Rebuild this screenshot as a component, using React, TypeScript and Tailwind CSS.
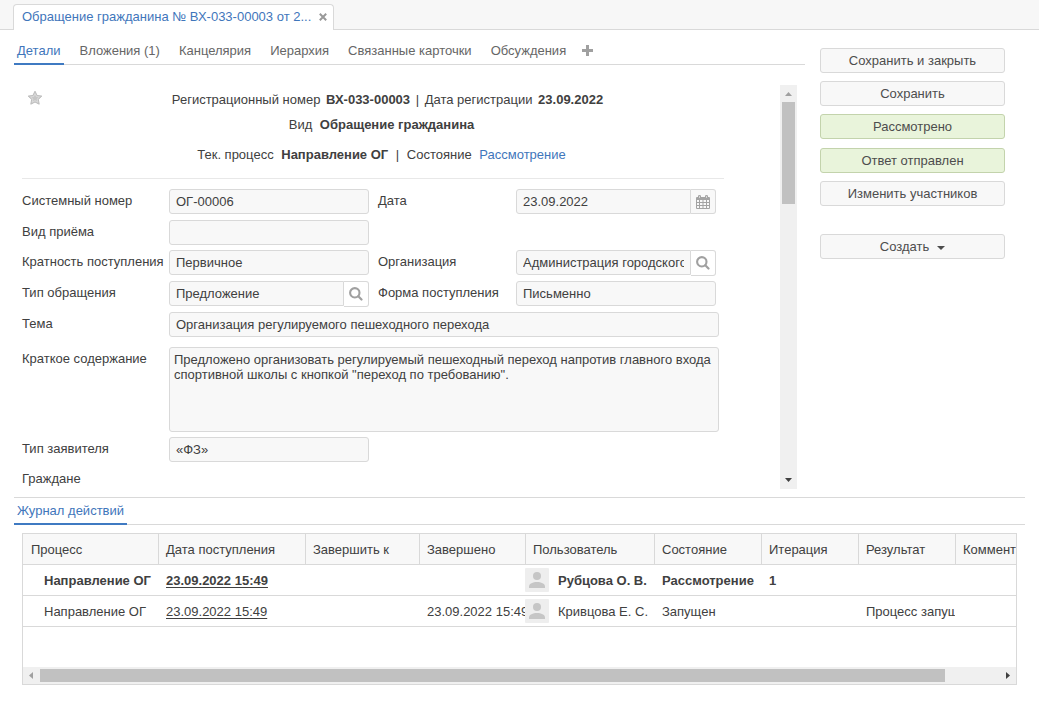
import type { ReactNode } from "react";

const tabs = ["Детали", "Вложения (1)", "Канцелярия", "Иерархия", "Связанные карточки", "Обсуждения"];

const actions = [
  { label: "Сохранить и закрыть", accent: false },
  { label: "Сохранить", accent: false },
  { label: "Рассмотрено", accent: true },
  { label: "Ответ отправлен", accent: true },
  { label: "Изменить участников", accent: false },
];

const columns = [
  { title: "Процесс", width: "w-[135px]" },
  { title: "Дата поступления", width: "w-[147px]" },
  { title: "Завершить к", width: "w-[114px]" },
  { title: "Завершено", width: "w-[106px]" },
  { title: "Пользователь", width: "w-[129px]" },
  { title: "Состояние", width: "w-[107px]" },
  { title: "Итерация", width: "w-[97px]" },
  { title: "Результат", width: "w-[97px]" },
  { title: "Комментарий", width: "w-[120px]" },
];

const rows = [
  {
    process: "Направление ОГ",
    received: "23.09.2022 15:49",
    finished: "",
    user: "Рубцова О. В.",
    state: "Рассмотрение",
    iteration: "1",
    result: "",
    current: true,
  },
  {
    process: "Направление ОГ",
    received: "23.09.2022 15:49",
    finished: "23.09.2022 15:49",
    user: "Кривцова Е. С.",
    state: "Запущен",
    iteration: "",
    result: "Процесс запущен",
    current: false,
  },
];

function SearchIcon() {
  return (
    <svg width="14" height="14" viewBox="0 0 14 14" fill="none" stroke="#a0a0a0" aria-hidden="true">
      <circle cx="5.8" cy="5.8" r="4.7" strokeWidth="2.1" />
      <path d="M9.300 9.300 L12.500 12.500" strokeWidth="2.200" strokeLinecap="round" />
    </svg>
  );
}

function CalendarIcon() {
  return (
    <svg width="14" height="14" viewBox="0 0 14 14" aria-hidden="true">
      <path
        fill="#a3a3a3"
        fillRule="evenodd"
        d="M1 2h1V1q0-1 1.500-1T5 1v1h4V1q0-1 1.500-1T12 1v1h1q1 0 1 1v10q0 1-1 1H1q-1 0-1-1V3q0-1 1-1zM1 5v2h2V5zM4 5v2h2.500V5zM7.500 5v2H10V5zM11 5v2h2V5zM1 8v2h2V8zM4 8v2h2.500V8zM7.500 8v2H10V8zM11 8v2h2V8zM1 11v2h2v-2zM4 11v2h2.500v-2zM7.500 11v2H10v-2zM11 11v2h2v-2zM3.200 1v2h.6V1zM10.200 1v2h.6V1z"
      />
    </svg>
  );
}

function StarIcon() {
  return (
    <svg width="16" height="16" viewBox="0 0 16 16" aria-hidden="true">
      <path
        d="M8 1.200l2.100 4.300 4.700.6-3.500 3.300.9 4.800L8 12l-4.200 2.200.9-4.800L1.200 6.100l4.700-.6z"
        fill="#cfcfcf"
        stroke="#bcbcbc"
        strokeLinejoin="round"
      />
      <path
        d="M8 3.800l1.300 2.700 3 .4-2.200 2.100.6 3L8 10.600 5.300 12l.6-3-2.200-2.100 3-.4z"
        fill="#c6c6c6"
        stroke="#e2e2e2"
        strokeWidth=".6"
      />
    </svg>
  );
}

function Avatar() {
  return (
    <svg className="shrink-0" width="24" height="24" viewBox="0 0 24 24" aria-hidden="true">
      <rect width="24" height="24" rx="1" fill="#eeeeee" />
      <circle cx="12" cy="8" r="4" fill="#c6c6c6" />
      <path d="M4 20v-1.500C4 15.600 8 14 12 14s8 1.600 8 4.500V20z" fill="#c6c6c6" />
    </svg>
  );
}

function Arrow({ d, color }: { d: string; color: string }) {
  return (
    <svg className="shrink-0" width="17" height="17" viewBox="0 0 17 17" aria-hidden="true">
      <path d={d} fill={color} />
    </svg>
  );
}

function Label({ id, children, className = "" }: { id: string; children: ReactNode; className?: string }) {
  return (
    <label htmlFor={id} className={`leading-6 whitespace-nowrap ${className}`}>
      {children}
    </label>
  );
}

const box = "border border-[#d9d9d9] bg-[#f8f8f8] outline-none";

function Field({ id, value, wide = false }: { id: string; value: string; wide?: boolean }) {
  return (
    <input
      id={id}
      readOnly
      defaultValue={value}
      className={`h-[25px] rounded-[3px] px-1.5 ${box} ${wide ? "col-span-3 w-[550px]" : "w-[200px]"}`}
    />
  );
}

function PickerField({ id, value, kind }: { id: string; value: string; kind: "search" | "date" }) {
  return (
    <div className="flex w-[200px] items-start">
      <input id={id} readOnly defaultValue={value} className={`h-[25px] min-w-0 flex-1 rounded-l-[3px] px-1.5 ${box}`} />
      <button
        type="button"
        aria-label={kind === "search" ? "Выбрать" : "Календарь"}
        className={`flex w-[25px] items-center justify-center rounded-r-[3px] border border-l-0 border-[#d9d9d9] ${
          kind === "search" ? "h-[26px] bg-white" : "h-[25px] bg-[#f8f8f8]"
        }`}
      >
        {kind === "search" ? <SearchIcon /> : <CalendarIcon />}
      </button>
    </div>
  );
}

export default function App() {
  return (
    <div className="bg-white pb-4 font-['Liberation_Sans',Arial,sans-serif] text-[13px] leading-4 text-[#404040]">
      <header className="flex h-[30px] items-end border-b border-[#d9d9d9] bg-[#f7f7f7] pl-[13px]">
        <div className="-mb-px flex h-[26px] w-[321px] items-center justify-between rounded-t-[4px] border border-b-0 border-[#d9d9d9] bg-white pr-1.5 pb-px pl-2">
          <a href="#card" className="whitespace-nowrap text-[#3f76bb]">
            Обращение гражданина № ВХ-033-00003 от 2...
          </a>
          <button type="button" aria-label="Закрыть вкладку" className="flex">
            <svg width="8" height="8" viewBox="0 0 8 8" aria-hidden="true">
              <path d="M.8 .8l6.400 6.400M7.200 .8L.8 7.200" stroke="#999" strokeWidth="2" />
            </svg>
          </button>
        </div>
      </header>

      <div className="flex gap-[15px] pr-[34px] pl-[14px]">
        <main className="min-w-0 flex-1">
          <nav className="flex h-[35px] items-stretch gap-[13px] border-b border-[#d9d9d9]">
            {tabs.map((tab, i) => (
              <a
                key={tab}
                href="#tab"
                className={`-mb-px border-b-2 px-[3px] pt-[13px] whitespace-nowrap ${
                  i === 0 ? "border-[#3f7ac2] text-[#3f76bb]" : "border-transparent text-[#666]"
                }`}
              >
                {tab}
              </a>
            ))}
            <button type="button" aria-label="Добавить вкладку" className="flex items-center pt-1.5">
              <svg width="11" height="11" viewBox="0 0 11 11" aria-hidden="true">
                <path d="M5.500 0v11M0 5.500h11" stroke="#a0a0a0" strokeWidth="3" />
              </svg>
            </button>
          </nav>

          <div className="mt-5 flex justify-between pr-2">
            <div className="min-w-0 overflow-hidden pl-2">
              <section className="flex w-[702px] border-b border-[#e8e8e8] pt-[5px] pb-[15px]">
                <button type="button" aria-label="В избранное" className="ml-[5px] flex h-4">
                  <StarIcon />
                </button>
                <div className="flex-1 pr-1 text-center">
                  <p className="mt-0.5 pl-3 whitespace-pre">
                    Регистрационный номер <b className="pl-0.5">ВХ-033-00003</b> <span className="px-0.5">|</span> Дата регистрации{" "}
                    <b className="pl-0.5">23.09.2022</b>
                  </p>
                  <p className="mt-[9px] whitespace-pre">
                    Вид <b className="pl-1">Обращение гражданина</b>
                  </p>
                  <p className="mt-3.5 whitespace-pre">
                    Тек. процесс <b className="px-1">Направление ОГ</b> | <span className="px-1">Состояние</span>{" "}
                    <a href="#state" className="text-[#3f76bb]">
                      Рассмотрение
                    </a>
                  </p>
                </div>
              </section>

              <form className="mt-2.5 grid grid-cols-[147px_209px_138px_203px] grid-rows-[31px_30px_31px_31px_35px_90px_30px_22px] items-start">
                <Label id="number">Системный номер</Label>
                <Field id="number" value="ОГ-00006" />
                <Label id="date">Дата</Label>
                <PickerField id="date" value="23.09.2022" kind="date" />

                <Label id="reception">Вид приёма</Label>
                <Field id="reception" value="" />

                <Label id="repeat" className="col-start-1">
                  Кратность поступления
                </Label>
                <Field id="repeat" value="Первичное" />
                <Label id="org">Организация</Label>
                <PickerField id="org" value="Администрация городского округа" kind="search" />

                <Label id="type">Тип обращения</Label>
                <PickerField id="type" value="Предложение" kind="search" />
                <Label id="channel">Форма поступления</Label>
                <Field id="channel" value="Письменно" />

                <Label id="subject">Тема</Label>
                <Field id="subject" value="Организация регулируемого пешеходного перехода" wide />

                <Label id="summary">Краткое содержание</Label>
                <textarea
                  id="summary"
                  readOnly
                  defaultValue={
                    'Предложено организовать регулируемый пешеходный переход напротив главного входа спортивной школы с кнопкой "переход по требованию".'
                  }
                  className={`col-span-3 h-[85px] w-[550px] resize-none rounded-[3px] px-1 py-1 leading-[15px] ${box}`}
                />

                <Label id="applicant">Тип заявителя</Label>
                <Field id="applicant" value="«ФЗ»" />

                <span className="col-start-1 leading-6">Граждане</span>
              </form>
            </div>

            <div className="flex w-[17px] shrink-0 flex-col items-center bg-[#f0f0f0]">
              <Arrow d="M5 11h7L8.500 7z" color="#a0a0a0" />
              <div className="h-[102px] w-[13px] bg-[#c1c1c1]" />
              <div className="flex-1" />
              <Arrow d="M5 6h7L8.500 10z" color="#404040" />
            </div>
          </div>
        </main>

        <aside className="grid w-[185px] shrink-0 grid-rows-[33px_33px_34px_33px_53px_25px] content-start items-start pt-[18px]">
          {actions.map(({ label, accent }) => (
            <button
              key={label}
              type="button"
              className={`h-[25px] rounded-[3px] border text-[#4d4d4d] ${
                accent ? "border-[#c3d3ac] bg-[#e9f4db]" : "border-[#d9d9d9] bg-[#f8f8f8]"
              }`}
            >
              {label}
            </button>
          ))}
          <button
            type="button"
            className="flex h-[25px] items-center justify-center gap-2 rounded-[3px] border border-[#d9d9d9] bg-[#f8f8f8] text-[#4d4d4d]"
          >
            Создать
            <svg className="mt-0.5" width="8" height="4" viewBox="0 0 8 4" aria-hidden="true">
              <path d="M0 0h8L4 4z" fill="#4d4d4d" />
            </svg>
          </button>
        </aside>
      </div>

      <section className="mt-2 mr-[14px] ml-[14px] border-t border-[#d9d9d9]">
        <nav className="flex h-[27px] border-b border-[#d9d9d9]">
          <a href="#log" className="-mb-px border-b-2 border-[#3f7ac2] px-[3px] pt-[5px] text-[#3f76bb]">
            Журнал действий
          </a>
        </nav>

        <div className="mt-2 mr-2 ml-2 border border-[#d9d9d9]">
          <div className="overflow-hidden pb-10">
            <table className="w-[1052px] table-fixed border-separate border-spacing-0">
              <thead>
                <tr className="h-[31px] bg-[#f8f8f8] text-left">
                  {columns.map(({ title, width }, i) => (
                    <th
                      key={title}
                      className={`border-b border-[#d9d9d9] pt-0.5 font-normal ${width} ${i === 0 ? "pl-2" : "border-l pl-[7px]"}`}
                    >
                      {title}
                    </th>
                  ))}
                </tr>
              </thead>
              <tbody>
                {rows.map((row) => (
                  <tr
                    key={row.user}
                    className={`h-[31px] whitespace-nowrap [&>td]:overflow-hidden [&>td]:border-b [&>td]:border-[#d9d9d9] ${
                      row.current ? "font-bold" : ""
                    }`}
                  >
                    <td className="pt-0.5 pl-[21px]">{row.process}</td>
                    <td className="pt-0.5 pl-2">
                      <a href="#entry" className="underline underline-offset-2">
                        {row.received}
                      </a>
                    </td>
                    <td />
                    <td className="pt-0.5 pl-2">{row.finished}</td>
                    <td>
                      <div className="flex items-center gap-[9px]">
                        <Avatar />
                        <span className="pt-0.5">{row.user}</span>
                      </div>
                    </td>
                    <td className="pt-0.5 pl-2">{row.state}</td>
                    <td className="pt-0.5 pl-2">{row.iteration}</td>
                    <td className="pt-0.5 pl-2">{row.result}</td>
                    <td />
                  </tr>
                ))}
              </tbody>
            </table>
          </div>
          <div className="flex h-[17px] items-center bg-[#f0f0f0]">
            <Arrow d="M10 5v7L6 8.500z" color="#a0a0a0" />
            <div className="mr-[54px] h-[13px] flex-1 bg-[#c1c1c1]" />
            <Arrow d="M7 5v7l4-3.500z" color="#404040" />
          </div>
        </div>
      </section>
    </div>
  );
}
